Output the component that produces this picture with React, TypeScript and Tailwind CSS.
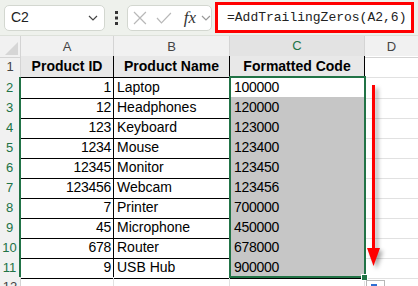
import React from 'react';

const rows: [number, string, string][] = [
  [1, 'Laptop', '100000'],
  [12, 'Headphones', '120000'],
  [123, 'Keyboard', '123000'],
  [1234, 'Mouse', '123400'],
  [12345, 'Monitor', '123450'],
  [123456, 'Webcam', '123456'],
  [7, 'Printer', '700000'],
  [45, 'Microphone', '450000'],
  [678, 'Router', '678000'],
  [9, 'USB Hub', '900000'],
];

function Chevron({ className }: { className?: string }) {
  return (
    <svg width="10" height="6" viewBox="0 0 10 6" className={className}>
      <path d="M1 1 L5 5 L9 1" fill="none" stroke="currentColor" strokeWidth="1.2" />
    </svg>
  );
}

function FormulaBar() {
  return (
    <div className="h-[36px] border-b border-[#dde1da] bg-[#eef1ec] flex items-center pl-[4px]">
      <div className="w-[101px] h-[26px] rounded-[5px] bg-white border border-[#d3d7d0] flex items-center justify-between pl-[6px] pr-[6px]">
        <span className="text-[14px] text-[#222]">C2</span>
        <Chevron className="text-[#444]" />
      </div>
      <div className="w-[22px] flex justify-center">
        <svg width="3" height="14" viewBox="0 0 3 14">
          <rect x="0" y="0" width="3" height="3" fill="#333" />
          <rect x="0" y="5.5" width="3" height="3" fill="#333" />
          <rect x="0" y="11" width="3" height="3" fill="#333" />
        </svg>
      </div>
      <div className="w-[85px] h-[26px] rounded-[5px] bg-white border border-[#d3d7d0] flex items-center pl-[5px] gap-[8px]">
        <svg width="14" height="14" viewBox="0 0 14 14">
          <path d="M1 1 L13 13 M13 1 L1 13" stroke="#b8b8b8" strokeWidth="1.2" />
        </svg>
        <svg width="16" height="12" viewBox="0 0 16 12" className="ml-[1px]">
          <path d="M1 6 L5.5 11 L15 1" fill="none" stroke="#b8b8b8" strokeWidth="1.2" />
        </svg>
        <span className="ml-[4px] font-['Liberation_Serif',serif] italic text-[17px] leading-none text-[#333]">fx</span>
        <Chevron className="text-[#999] -ml-[3px]" />
      </div>
      <div className="ml-[3px] w-[199px] h-[31px] bg-white border-[3px] border-[#ff0000] flex items-center pl-[9px]">
        <span className="font-['Liberation_Mono',monospace] text-[13px] text-[#222]">=AddTrailingZeros(A2,6)</span>
      </div>
    </div>
  );
}

export default function App() {
  const grid = 'grid grid-cols-[21px_93px_116px_135px_1fr]';
  return (
    <div className="w-[418px] h-[286px] overflow-hidden bg-white font-['Liberation_Sans',Arial,sans-serif]">
      <FormulaBar />
      <div className="relative">
        {/* column headers */}
        <div className={`${grid} h-[20px] bg-[#f1f1f1] text-[13px] text-[#444]`}>
          <div className="border-r border-b border-[#d4d4d4] relative">
            <div className="absolute right-[2px] bottom-[2px] w-0 h-0 border-l-[13px] border-l-transparent border-b-[13px] border-b-[#d6d6d6]" />
          </div>
          <div className="border-r border-b border-[#d4d4d4] flex items-center justify-center">A</div>
          <div className="border-r border-b border-[#d4d4d4] flex items-center justify-center">B</div>
          <div className="border-r border-b-2 border-r-[#d4d4d4] border-b-[#217346] bg-[#e3e3e3] text-[#217346] flex items-center justify-center">C</div>
          <div className="border-b border-[#d4d4d4] flex items-center justify-center">D</div>
        </div>
        {/* row 1 */}
        <div className={`${grid} h-[21px] text-[14px]`}>
          <div className="bg-[#f1f1f1] border-r border-b border-[#d4d4d4] text-[13px] text-[#444] flex items-center justify-center">1</div>
          <div className="bg-[#e8e8e8] border-r border-b border-black font-bold text-black flex items-center justify-center">Product ID</div>
          <div className="bg-[#e8e8e8] border-r border-b border-black font-bold text-black flex items-center justify-center">Product Name</div>
          <div className="bg-[#e8e8e8] border-r border-b border-black font-bold text-black flex items-center justify-center">Formatted Code</div>
          <div className="border-b border-[#e1e1e1]" />
        </div>
        {rows.map(([id, name, code], i) => (
          <div key={id} className={`${grid} h-[20px] text-[14px] text-black`}>
            <div className="bg-[#f1f1f1] border-r-2 border-b border-r-[#217346] border-b-[#d4d4d4] text-[13px] text-[#217346] flex items-center justify-center">
              {i + 2}
            </div>
            <div className="border-r border-b border-black flex items-center justify-end pr-[2px] tracking-[-0.3px]">{id}</div>
            <div className="border-r border-b border-black flex items-center pl-[3px]">{name}</div>
            <div className={`border-r border-b border-black flex items-center pl-[4px] tracking-[-0.3px] ${i === 0 ? 'bg-white' : 'bg-[#c6c6c6]'}`}>{code}</div>
            <div className="border-b border-[#e1e1e1]" />
          </div>
        ))}
        <div className={`${grid} h-[20px] text-[13px]`}>
          <div className="bg-[#f1f1f1] border-r border-[#d4d4d4] text-[#444] flex items-center justify-center">12</div>
          <div className="border-r border-[#e1e1e1]" />
          <div className="border-r border-[#e1e1e1]" />
          <div className="border-r border-[#e1e1e1]" />
          <div />
        </div>

        {/* selection C2:C11 */}
        <div className="absolute left-[229px] top-[40px] w-[137px] h-[202px] border-2 border-[#217346] pointer-events-none" />
        <div className="absolute left-[361px] top-[238px] w-[7px] h-[7px] bg-[#217346] border border-white" />

        {/* red arrow */}
        <svg
          className="absolute left-[365px] top-[49px] drop-shadow-[3px_3px_2px_rgba(0,0,0,0.35)]"
          width="18"
          height="184"
          viewBox="0 0 18 184"
        >
          <rect x="7" y="0" width="3" height="166" fill="#ff0000" />
          <polygon points="2,163 15,163 8.5,181" fill="#ff0000" />
        </svg>

        {/* quick analysis */}
        <div className="absolute left-[366px] top-[244px] w-[19px] h-[14px] bg-white border border-[#b8b8b8] p-[2px]">
          <div className="w-[6px] h-[5px] bg-[#2f6fd3] ml-[2px] mt-[1px]" />
        </div>
      </div>
    </div>
  );
}
